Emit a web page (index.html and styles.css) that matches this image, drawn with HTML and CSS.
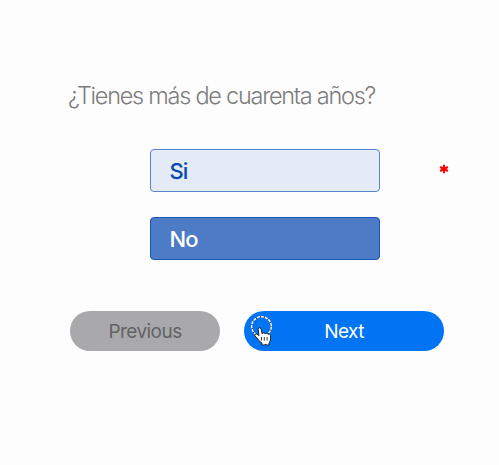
FILE: index.html
```html
<!DOCTYPE html>
<html lang="es">
<head>
<meta charset="utf-8">
<title>Encuesta</title>
<link rel="stylesheet" href="styles.css">
</head>
<body>
<main class="survey">
  <h1 class="question">¿Tienes más de cuarenta años?</h1>
  <div class="answers">
    <div class="options">
      <button class="option" type="button"><span>Si</span></button>
      <button class="option selected" type="button"><span>No</span></button>
    </div>
    <svg class="required" viewBox="0 0 10 10" role="img" aria-label="Obligatorio"><path d="M5 .8v8.4M1.1 3l7.8 4M8.9 3l-7.8 4"/></svg>
  </div>
  <nav class="actions">
    <button class="pill previous" type="button"><span>Previous</span></button>
    <button class="pill next" type="button"><span>Next</span>
      <svg class="pointer" viewBox="0 0 26 34" aria-hidden="true">
        <circle class="ring-back" cx="12.5" cy="12.5" r="9.8"/>
        <circle class="ring" cx="12.5" cy="12.5" r="9.8"/>
        <path class="hand" d="M9.2 15.5q0-1.8 1.4-1.8t1.6 1.8l.9 4.2q.4-1 1.6-.8 1.1.1 1.5 1 .5-.7 1.5-.5 1.2.1 1.5 1.1.3-.5 1.1-.4 1.2.2 1.2 1.5v3.1q0 1.5-.7 2.9l-.8 1.6v1.8h-2.4l-1-1.1-1.1 1.1h-2.5v-1.8L9.8 26.5q-.8-1.6-2-2.8L6 22q-.8-1 .1-1.7 1.1-.8 2.2.1l1.7 1.2z"/>
        <path class="fingers" d="M12.5 23v3.6M15.3 23v3.6M18.1 23v3.6"/>
      </svg>
    </button>
  </nav>
</main>
</body>
</html>
```
FILE: styles.css
```css
* { box-sizing: border-box; }
body {
  margin: 0;
  background: #fdfdfd;
  font-family: Inter, "Liberation Sans", sans-serif;
}
.survey { height: 465px; padding: 80px 50px 0 68px; }
.question {
  margin: 0;
  height: 32px;
  font-size: 23.5px;
  line-height: 32px;
  font-weight: 275;
  letter-spacing: -1.26px;
  color: #7c7c7c;
  white-space: nowrap;
}
.answers { display: flex; margin: 37px 0 0 82px; }
.options { display: flex; flex-direction: column; gap: 25px; width: 230px; }
.option {
  height: 43px;
  padding: 2px 0 0 18.5px;
  border: 1px solid #5884cb;
  border-radius: 4px;
  background: #e4eaf6;
  color: #0549ae;
  font: 450 22px/39px Inter, "Liberation Sans", sans-serif;
  letter-spacing: -0.9px;
  text-align: left;
}
.option.selected { background: #4d7bc6; border-color: #1956b6; color: #fff; }
.required {
  width: 10px;
  height: 10px;
  margin: 15px 0 0 59px;
  fill: none;
  stroke: #f00;
  stroke-width: 2;
}
.actions { display: flex; gap: 24px; margin: 51px 0 0 2px; }
.pill {
  position: relative;
  height: 40px;
  padding: 2px 0 0;
  border: 0;
  border-radius: 20px;
  font: 400 19px/38px Inter, "Liberation Sans", sans-serif;
  letter-spacing: -0.55px;
}
.previous { width: 150px; background: #a9a9ab; color: #636365; }
.next { width: 200px; background: #0074f2; color: #fff; }
.pointer {
  position: absolute;
  left: 5px;
  top: 3px;
  width: 26px;
  height: 34px;
  fill: none;
}
.ring-back { stroke: #111; stroke-width: 1.3; }
.ring { stroke: #fff; stroke-width: 1.5; stroke-dasharray: 3.3 0.8; }
.hand { fill: #fff; stroke: #111; stroke-width: 0.9; stroke-linejoin: round; }
.fingers { stroke: #222; stroke-width: 0.9; }
```
